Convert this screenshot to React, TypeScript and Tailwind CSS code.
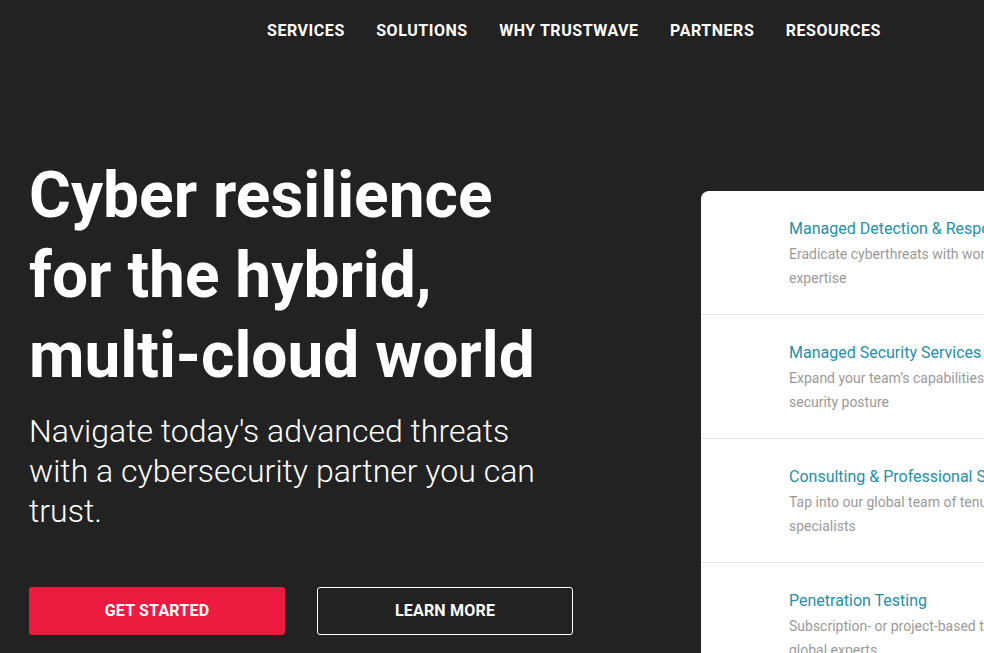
import React from "react";

const items = [
  {
    title: "Managed Detection & Response",
    desc: "Eradicate cyberthreats with world-class intel and expertise",
  },
  {
    title: "Managed Security Services",
    desc: "Expand your team’s capabilities and strengthen your security posture",
  },
  {
    title: "Consulting & Professional Services",
    desc: "Tap into our global team of tenured cybersecurity specialists",
  },
  {
    title: "Penetration Testing",
    desc: "Subscription- or project-based testing, delivered by global experts",
  },
];

export default function App() {
  return (
    <div
      className="w-[984px] h-[653px] overflow-hidden bg-[#222222] text-white"
      style={{ fontFamily: "Roboto, 'Liberation Sans', sans-serif" }}
    >
      <nav className="flex h-[60px] items-center gap-[31.4px] pl-[267px] pt-[2px] text-[16px] font-bold uppercase tracking-[0.55px]">
        <span>Services</span>
        <span>Solutions</span>
        <span>Why Trustwave</span>
        <span>Partners</span>
        <span>Resources</span>
      </nav>
      <div className="flex">
        <div className="w-[701px] shrink-0 pl-[29px] pt-[96px]">
          <h1 className="text-[64px] font-bold leading-[80px]">
            Cyber resilience
            <br />
            for the hybrid,
            <br />
            multi-cloud world
          </h1>
          <p className="mt-[15px] w-[520px] text-[32px] font-light leading-[40px]">
            Navigate today's advanced threats with a cybersecurity partner you can trust.
          </p>
          <div className="mt-[56px] flex gap-8">
            <button className="flex h-[48px] w-[256px] items-center justify-center rounded-[3px] bg-[#ec1b3f] text-[16px] font-bold uppercase tracking-[0.2px] text-white">
              Get Started
            </button>
            <button className="flex h-[48px] w-[256px] items-center justify-center rounded-[3px] border border-white text-[16px] font-bold uppercase tracking-[0.2px] text-white">
              Learn More
            </button>
          </div>
        </div>
        <div className="mt-[131px] w-[440px] shrink-0 rounded-tl-[8px] bg-white">
          {items.map((it, i) => (
            <div
              key={i}
              className="border-b border-[#e4e4e4] pb-[24px] pl-[88px] pt-[25px]"
            >
              <div className="mb-[2px] pt-[1px] text-[16px] leading-[23px] text-[#2590a9] whitespace-nowrap">
                {it.title}
              </div>
              <div className="w-[330px] text-[14px] leading-[24px] text-[#9a9a9a]">
                {it.desc}
              </div>
            </div>
          ))}
        </div>
      </div>
    </div>
  );
}
